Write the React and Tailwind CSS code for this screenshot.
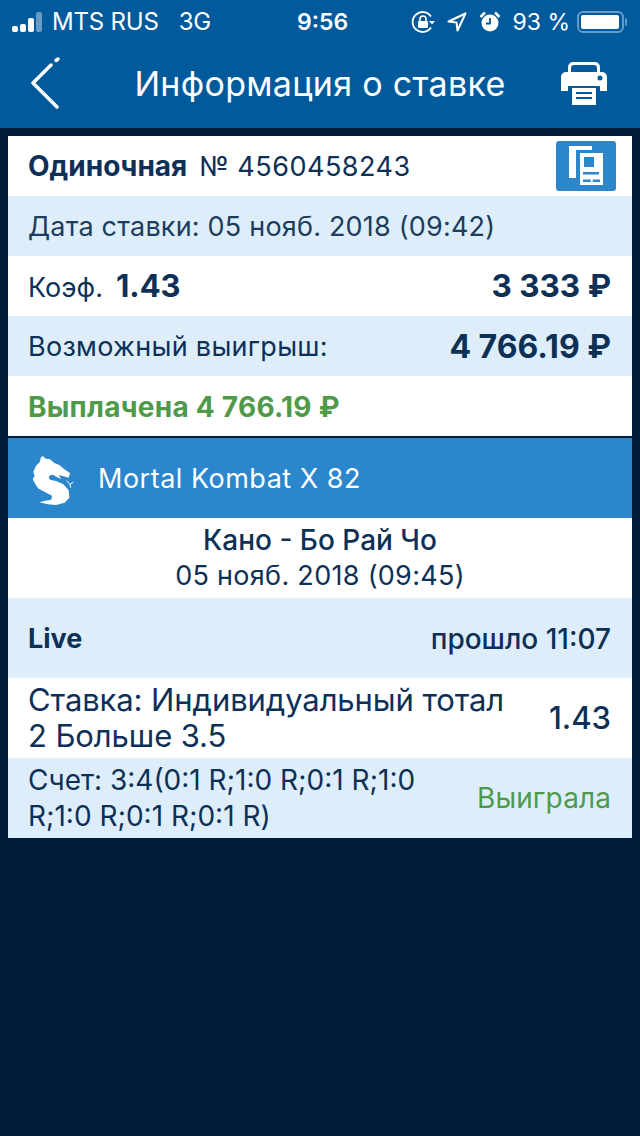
const font = { fontFamily: 'Inter, "Noto Sans", sans-serif' }

function StatusBar() {
  return (
    <div className="flex h-10 items-center justify-between pl-3 pr-[13px] pt-1 text-[23px] text-white">
      <div className="flex items-center">
        <div className="flex items-end gap-[2px]">
          <div className="h-[6px] w-[6px] rounded-[2px] bg-white" />
          <div className="h-2 w-[6px] rounded-[2px] bg-white" />
          <div className="h-[14px] w-[6px] rounded-[2px] bg-white" />
          <div className="h-5 w-[6px] rounded-[2px] bg-white/40" />
        </div>
        <span className="ml-[10px] text-[24px] tracking-[-0.2px]">MTS RUS</span>
        <span className="ml-[20px] text-[24px] tracking-[-0.2px]">3G</span>
      </div>
      <span className="absolute left-[297px] font-semibold">9:56</span>
      <div className="flex items-center">
        <svg width="24" height="24" viewBox="0 0 24 24" fill="none" stroke="white" strokeWidth="1.8">
          <path d="M20 6.500A10 10 0 1 0 20 17.500" />
          <path d="M18 11h6l-3 3.500z" fill="white" stroke="none" />
          <rect x="7" y="11" width="10" height="7" rx="1" fill="white" stroke="none" />
          <path d="M9 11V9a3 3 0 0 1 6 0v2" strokeWidth="1.600" />
        </svg>
        <svg className="ml-[12px]" width="20" height="20" viewBox="0 0 20 20" fill="none" stroke="white" strokeWidth="2" strokeLinejoin="round">
          <path d="M18.500 1.500L1.500 9.500l8 1 1 8z" />
        </svg>
        <svg className="ml-[12px]" width="22" height="22" viewBox="0 0 22 22">
          <circle cx="11" cy="12" r="8.500" fill="white" />
          <path d="M11 7v5.500H7" fill="none" stroke="#005a9c" strokeWidth="1.800" />
          <path d="M1.500 6L6 1.500M20.500 6L16 1.500" stroke="white" strokeWidth="2.500" />
        </svg>
        <span className="ml-[11px]">93 %</span>
        <div className="ml-[7px] flex items-center">
          <div className="h-[22px] w-[47px] rounded-[6px] border-2 border-white/40 p-[2px]">
            <div className="h-full w-[38px] rounded-[2px] bg-white" />
          </div>
          <div className="ml-[1px] h-2 w-[2px] rounded-r-sm bg-white/40" />
        </div>
      </div>
    </div>
  )
}

function NavBar() {
  return (
    <div className="flex h-[88px] items-center justify-between pb-[2px] pl-[30px] pr-[33px]">
      <svg width="32" height="52" viewBox="0 0 32 52" fill="none" stroke="white" strokeWidth="3.500" strokeLinecap="round" strokeLinejoin="round">
        <path d="M27 50L3 26 21 8" />
        <path d="M26 3.500L28 2" />
      </svg>
      <h1 className="ml-[17px] text-[34px] font-normal tracking-[0.3px] text-white">Информация о ставке</h1>
      <svg width="46" height="44" viewBox="0 0 46 44" fill="white">
        <path d="M7 14V6a5 5 0 0 1 5-5h22a5 5 0 0 1 5 5v8h-3V7a3 3 0 0 0-3-3H13a3 3 0 0 0-3 3v7z" />
        <path fillRule="evenodd" d="M5 11h36a5 5 0 0 1 5 5v14h-7v-5H7v5H0V16a5 5 0 0 1 5-5zm34 3.500a2.500 2.500 0 1 0 0 5 2.500 2.500 0 0 0 0-5z" />
        <path fillRule="evenodd" d="M11 27h24v17H11zm4 4v2h16v-2zm0 5v2h16v-2z" />
      </svg>
    </div>
  )
}

function Row({ tone = 'white', className = '', children }) {
  return (
    <div className={`flex items-center justify-between pl-5 ${tone === 'blue' ? 'bg-[#ddeefa]' : 'bg-white'} ${className}`}>
      {children}
    </div>
  )
}

function DragonLogo() {
  return (
    <svg width="56" height="56" viewBox="0 0 168 168" fill="white">
      <path d="M50 15L60 23L72 25L85 36L100 42L114 54L132 66L128 80L112 76L98 72L106 84L92 78L82 72L74 72L68 78L72 86L90 90L112 100L128 118L130 140L116 155L90 162L65 160L40 154L58 149L76 146L78 134L58 124L36 112L26 96L20 84L26 76L22 62L30 44L42 32L44 20Z" />
      <path d="M122 90L132 100L142 94M132 100L134 110" fill="none" stroke="white" strokeWidth="3" />
    </svg>
  )
}

function CopyIcon() {
  return (
    <svg width="60" height="50" viewBox="0 0 60 50">
      <rect width="60" height="50" rx="3" fill="#2b86cb" />
      <path d="M13 5h23v4H20v28h-7z" fill="white" />
      <path fillRule="evenodd" d="M24 12h23v32H24zm4 4v10h10V16zm-1 15v2.500h16V31zm0 7.500V41h7.700v-2.500zm9.700 0V41H44v-2.500z" fill="white" />
    </svg>
  )
}

export default function App() {
  return (
    <div className="relative min-h-[1136px] bg-[#001c3b] text-[#0d3057]" style={font}>
      <div className="bg-[#005a9c]">
        <StatusBar />
        <NavBar />
      </div>
      <div className="mx-2 mt-2">
        <Row className="h-[60px] pr-4">
          <div className="flex items-baseline">
            <span className="text-[28px] font-bold">Одиночная</span>
            <span className="ml-3 text-[27px] tracking-[0.5px]">№ 4560458243</span>
          </div>
          <CopyIcon />
        </Row>
        <Row tone="blue" className="h-[60px] pr-[21px] pt-[2px] text-[27px] text-[#1c3d5e]">
          <span className="tracking-[0.2px]">Дата ставки: 05 нояб. 2018 (09:42)</span>
        </Row>
        <Row className="h-[60px] pr-[21px]">
          <div className="flex items-baseline">
            <span className="text-[27px]">Коэф.</span>
            <span className="ml-[13px] text-[31px] font-bold">1.43</span>
          </div>
          <span className="text-[31.500px] font-bold">3 333 ₽</span>
        </Row>
        <Row tone="blue" className="h-[60px] pr-[21px] pt-[2px]">
          <span className="text-[27px] tracking-[0.3px]">Возможный выигрыш:</span>
          <span className="text-[32px] font-bold">4 766.19 ₽</span>
        </Row>
        <Row className="h-[60px] pr-[21px] pt-px">
          <span className="text-[28px] font-bold tracking-[0.25px] text-[#4f9a4a]">Выплачена 4 766.19 ₽</span>
        </Row>
        <div className="mt-[2px] flex h-20 items-center bg-[#2b86cb] pl-[18px] pt-[2px] text-[27px] text-white">
          <DragonLogo />
          <span className="ml-4 tracking-[0.5px]">Mortal Kombat X 82</span>
        </div>
        <div className="flex h-20 flex-col items-center justify-center bg-white leading-[36px]">
          <span className="text-[28px] font-medium">Кано - Бо Рай Чо</span>
          <span className="text-[27px] tracking-[0.3px]">05 нояб. 2018 (09:45)</span>
        </div>
        <Row tone="blue" className="h-20 pr-[21px] pt-[2px] text-[27px]">
          <span className="font-bold">Live</span>
          <span className="text-[28px] font-medium">прошло 11:07</span>
        </Row>
        <Row className="h-20 pr-[21px] text-[31px] leading-[36px]">
          <span className="w-[490px] tracking-[-0.1px]">Ставка: Индивидуальный тотал 2 Больше 3.5</span>
          <span className="font-medium">1.43</span>
        </Row>
        <Row tone="blue" className="h-20 pr-[21px]">
          <span className="w-[420px] text-[28px] leading-[36px]">Счет: 3:4(0:1 R;1:0 R;0:1 R;1:0 R;1:0 R;0:1 R;0:1 R)</span>
          <span className="text-[28px] tracking-[0.1px] text-[#4f9a4a]">Выиграла</span>
        </Row>
      </div>
    </div>
  )
}
